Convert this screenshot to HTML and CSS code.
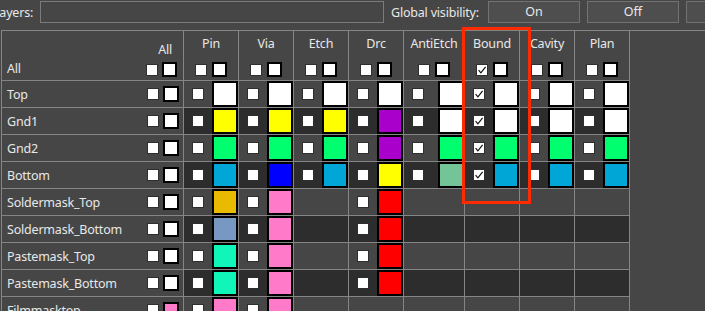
FILE: index.html
```html
<!DOCTYPE html>
<html>
<head>
<meta charset="utf-8">
<title>Layers</title>
<link rel="stylesheet" href="styles.css">
</head>
<body>
<div class="toolbar">
  <span class="lbl lbl-layers">Layers:</span>
  <div class="field"></div>
  <span class="lbl lbl-gv">Global visibility:</span>
  <button class="btn">On</button>
  <button class="btn">Off</button>
  <button class="btn"></button>
</div>
<div class="view">
  <div class="grid">
    <!-- header -->
    <div class="hd hd-label">
      <span class="all-row">All</span>
      <div class="all-col">
        <span class="all-title">All</span>
        <div class="pair pair-l"><span class="cb"></span><span class="hb"></span></div>
      </div>
    </div>
    <div class="hd"><span class="name">Pin</span><div class="pair"><span class="cb"></span><span class="hb"></span></div></div>
    <div class="hd"><span class="name">Via</span><div class="pair"><span class="cb"></span><span class="hb"></span></div></div>
    <div class="hd"><span class="name">Etch</span><div class="pair"><span class="cb"></span><span class="hb"></span></div></div>
    <div class="hd"><span class="name">Drc</span><div class="pair"><span class="cb"></span><span class="hb"></span></div></div>
    <div class="hd"><span class="name">AntiEtch</span><div class="pair"><span class="cb"></span><span class="hb"></span></div></div>
    <div class="hd"><span class="name">Bound</span><div class="pair"><span class="cb"><svg viewBox="0 0 10 10"><path d="M1.6 5.2 L3.9 7.8 L8.6 1.8"/></svg></span><span class="hb"></span></div></div>
    <div class="hd"><span class="name">Cavity</span><div class="pair"><span class="cb"></span><span class="hb"></span></div></div>
    <div class="hd"><span class="name">Plan</span><div class="pair"><span class="cb"></span><span class="hb"></span></div></div>

    <!-- Top -->
    <div class="r">
      <div class="lc"><span class="t">Top</span><div class="pair pair-l"><span class="cb"></span><span class="lb"></span></div></div>
      <div class="dc"><span class="cb"></span><span class="sw white"></span></div>
      <div class="dc"><span class="cb"></span><span class="sw white"></span></div>
      <div class="dc"><span class="cb"></span><span class="sw white"></span></div>
      <div class="dc"><span class="cb"></span><span class="sw white"></span></div>
      <div class="dc"><span class="cb"></span><span class="sw white"></span></div>
      <div class="dc"><span class="cb"><svg viewBox="0 0 10 10"><path d="M1.6 5.2 L3.9 7.8 L8.6 1.8"/></svg></span><span class="sw white"></span></div>
      <div class="dc"><span class="cb"></span><span class="sw white"></span></div>
      <div class="dc"><span class="cb"></span><span class="sw white"></span></div>
    </div>

    <!-- Gnd1 -->
    <div class="r dark">
      <div class="lc"><span class="t">Gnd1</span><div class="pair pair-l"><span class="cb"></span><span class="lb"></span></div></div>
      <div class="dc"><span class="cb"></span><span class="sw yellow"></span></div>
      <div class="dc"><span class="cb"></span><span class="sw yellow"></span></div>
      <div class="dc"><span class="cb"></span><span class="sw yellow"></span></div>
      <div class="dc"><span class="cb"></span><span class="sw purple"></span></div>
      <div class="dc"><span class="cb"></span><span class="sw white"></span></div>
      <div class="dc"><span class="cb"><svg viewBox="0 0 10 10"><path d="M1.6 5.2 L3.9 7.8 L8.6 1.8"/></svg></span><span class="sw white"></span></div>
      <div class="dc"><span class="cb"></span><span class="sw white"></span></div>
      <div class="dc"><span class="cb"></span><span class="sw white"></span></div>
    </div>

    <!-- Gnd2 -->
    <div class="r">
      <div class="lc"><span class="t">Gnd2</span><div class="pair pair-l"><span class="cb"></span><span class="lb"></span></div></div>
      <div class="dc"><span class="cb"></span><span class="sw green"></span></div>
      <div class="dc"><span class="cb"></span><span class="sw green"></span></div>
      <div class="dc"><span class="cb"></span><span class="sw green"></span></div>
      <div class="dc"><span class="cb"></span><span class="sw purple"></span></div>
      <div class="dc"><span class="cb"></span><span class="sw green"></span></div>
      <div class="dc"><span class="cb"><svg viewBox="0 0 10 10"><path d="M1.6 5.2 L3.9 7.8 L8.6 1.8"/></svg></span><span class="sw green"></span></div>
      <div class="dc"><span class="cb"></span><span class="sw green"></span></div>
      <div class="dc"><span class="cb"></span><span class="sw green"></span></div>
    </div>

    <!-- Bottom -->
    <div class="r dark">
      <div class="lc"><span class="t">Bottom</span><div class="pair pair-l"><span class="cb"></span><span class="lb"></span></div></div>
      <div class="dc"><span class="cb"></span><span class="sw cyan"></span></div>
      <div class="dc"><span class="cb"></span><span class="sw blue"></span></div>
      <div class="dc"><span class="cb"></span><span class="sw cyan"></span></div>
      <div class="dc"><span class="cb"></span><span class="sw yellow"></span></div>
      <div class="dc"><span class="cb"></span><span class="sw sage"></span></div>
      <div class="dc"><span class="cb"><svg viewBox="0 0 10 10"><path d="M1.6 5.2 L3.9 7.8 L8.6 1.8"/></svg></span><span class="sw cyan"></span></div>
      <div class="dc"><span class="cb"></span><span class="sw cyan"></span></div>
      <div class="dc"><span class="cb"></span><span class="sw cyan"></span></div>
    </div>

    <!-- Soldermask_Top -->
    <div class="r">
      <div class="lc"><span class="t">Soldermask_Top</span><div class="pair pair-l"><span class="cb"></span><span class="lb"></span></div></div>
      <div class="dc"><span class="cb"></span><span class="sw gold"></span></div>
      <div class="dc"><span class="cb"></span><span class="sw pink"></span></div>
      <div class="dc"></div>
      <div class="dc"><span class="cb"></span><span class="sw red"></span></div>
      <div class="dc"></div>
      <div class="dc"></div>
      <div class="dc"></div>
      <div class="dc"></div>
    </div>

    <!-- Soldermask_Bottom -->
    <div class="r dark">
      <div class="lc"><span class="t">Soldermask_Bottom</span><div class="pair pair-l"><span class="cb"></span><span class="lb"></span></div></div>
      <div class="dc"><span class="cb"></span><span class="sw steel"></span></div>
      <div class="dc"><span class="cb"></span><span class="sw pink"></span></div>
      <div class="dc"></div>
      <div class="dc"><span class="cb"></span><span class="sw red"></span></div>
      <div class="dc"></div>
      <div class="dc"></div>
      <div class="dc"></div>
      <div class="dc"></div>
    </div>

    <!-- Pastemask_Top -->
    <div class="r">
      <div class="lc"><span class="t">Pastemask_Top</span><div class="pair pair-l"><span class="cb"></span><span class="lb"></span></div></div>
      <div class="dc"><span class="cb"></span><span class="sw aqua"></span></div>
      <div class="dc"><span class="cb"></span><span class="sw pink"></span></div>
      <div class="dc"></div>
      <div class="dc"><span class="cb"></span><span class="sw red"></span></div>
      <div class="dc"></div>
      <div class="dc"></div>
      <div class="dc"></div>
      <div class="dc"></div>
    </div>

    <!-- Pastemask_Bottom -->
    <div class="r dark">
      <div class="lc"><span class="t">Pastemask_Bottom</span><div class="pair pair-l"><span class="cb"></span><span class="lb"></span></div></div>
      <div class="dc"><span class="cb"></span><span class="sw aqua"></span></div>
      <div class="dc"><span class="cb"></span><span class="sw pink"></span></div>
      <div class="dc"></div>
      <div class="dc"><span class="cb"></span><span class="sw red"></span></div>
      <div class="dc"></div>
      <div class="dc"></div>
      <div class="dc"></div>
      <div class="dc"></div>
    </div>

    <!-- Filmmasktop -->
    <div class="r">
      <div class="lc"><span class="t">Filmmasktop</span><div class="pair pair-l"><span class="cb"></span><span class="lb pink"></span></div></div>
      <div class="dc"><span class="cb"></span><span class="sw pink"></span></div>
      <div class="dc"><span class="cb"></span><span class="sw pink"></span></div>
      <div class="dc"></div>
      <div class="dc"></div>
      <div class="dc"></div>
      <div class="dc"></div>
      <div class="dc"></div>
      <div class="dc"></div>
    </div>
  </div>
</div>
<div class="mark"></div>
</body>
</html>
```
FILE: styles.css
```css
* { box-sizing: border-box; }

html, body { margin: 0; padding: 0; }

body {
  position: relative;
  width: 705px;
  height: 311px;
  overflow: hidden;
  background: #464646;
  color: #e8e8e8;
  font-family: "Noto Sans", "Open Sans", sans-serif;
  font-size: 12.5px;
  letter-spacing: -0.2px;
}

/* ---------- toolbar ---------- */
.toolbar {
  display: flex;
  align-items: flex-start;
  gap: 7px;
  height: 30px;
  padding-top: 1px;
  white-space: nowrap;
}

.lbl { line-height: 23px; }

.lbl-layers {
  margin-left: -7px;
  width: 40px;
  flex: none;
}

.field {
  width: 344px;
  height: 22px;
  flex: none;
  border: 1px solid #7a7a7a;
  background: #464646;
}

.lbl-gv { width: 90px; flex: none; }

.btn {
  width: 92px;
  height: 22px;
  flex: none;
  padding: 0;
  border: 1px solid #727272;
  background: #4e4e4e;
  color: #e8e8e8;
  font: inherit;
  line-height: 20px;
  text-align: center;
}

/* ---------- grid ---------- */
.view {
  margin-left: 1px;
  border-top: 1px solid #858585;
  border-left: 1px solid #858585;
  height: 281px;
}

.grid {
  display: grid;
  grid-template-columns: 181px repeat(4, 54px) 60px repeat(3, 54px);
  grid-template-rows: 49px repeat(9, 26px);
  gap: 1px;
  width: max-content;
  background: #858585;
  border-right: 1px solid #858585;
}

.r { display: contents; }

.hd, .lc, .dc { background: #464646; }
.r.dark .dc { background: #2d2d2d; }

/* header */
.hd {
  display: flex;
  flex-direction: column;
  align-items: center;
  justify-content: space-between;
  padding: 5px 0 3px;
}

.name { line-height: 16px; }

.hd-label {
  flex-direction: row;
  align-items: flex-end;
  justify-content: space-between;
  padding: 0 6px 3px 5px;
}

.all-row { line-height: 16px; }

.all-col {
  display: flex;
  flex-direction: column;
  align-items: flex-end;
}

.all-title {
  line-height: 16px;
  margin-right: 5px;
  margin-bottom: 4px;
}

.pair {
  display: flex;
  align-items: center;
  gap: 5px;
}
.pair-l { gap: 4px; }

/* checkboxes / swatches */
.cb {
  display: flex;
  align-items: center;
  justify-content: center;
  width: 12px;
  height: 12px;
  flex: none;
  background: #fff;
  border: 1px solid #2f2f2f;
}

.cb svg {
  width: 10px;
  height: 10px;
  fill: none;
  stroke: #111;
  stroke-width: 1.2;
}

.hb {
  width: 15px;
  height: 15px;
  flex: none;
  background: #fff;
  border: 2px solid #000;
}

.lb {
  width: 16px;
  height: 16px;
  flex: none;
  background: #fff;
  border: 2px solid #000;
}

/* label cells */
.lc {
  display: flex;
  align-items: center;
  padding: 0 4px 0 5px;
}
.lc .t {
  flex: 1;
  line-height: 16px;
  padding-top: 2px;
  white-space: nowrap;
}

/* data cells */
.dc {
  display: flex;
  align-items: center;
  padding-left: 8px;
}

.sw {
  width: 26px;
  height: 26px;
  flex: none;
  margin-left: auto;
  border: 2px solid #000;
}

.white  { background: #ffffff; }
.yellow { background: #ffff00; }
.purple { background: #aa00cc; }
.green  { background: #00ff6e; }
.cyan   { background: #00a6d6; }
.blue   { background: #0000ff; }
.sage   { background: #73c496; }
.gold   { background: #e8bb00; }
.steel  { background: #7898c4; }
.aqua   { background: #10f5b8; }
.pink   { background: #ff7ac8; }
.red    { background: #ff0000; }

/* annotation overlay */
.mark {
  position: absolute;
  left: 462px;
  top: 27px;
  width: 69px;
  height: 177px;
  border: 3px solid #ff2a00;
}
```
